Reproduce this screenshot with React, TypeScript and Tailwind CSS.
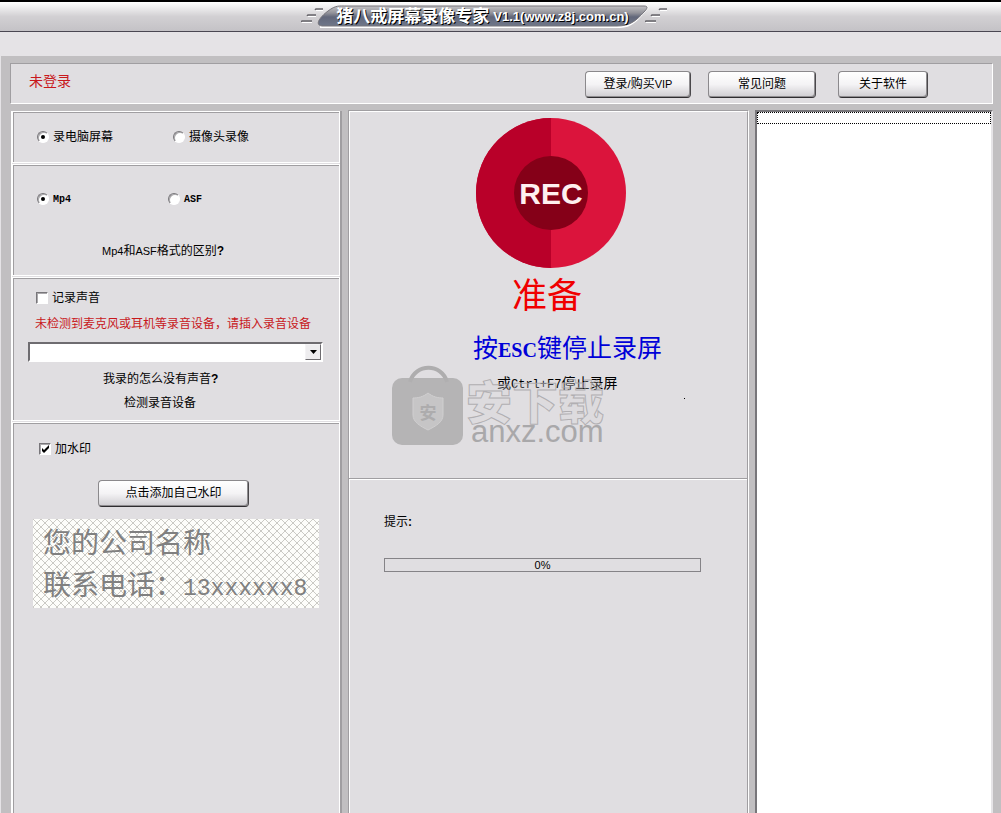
import type { ReactNode } from "react";
import clsx from "clsx";

const Latin = ({ children }: { children: ReactNode }) => (
  <span className="font-['Liberation_Sans','Noto_Sans_CJK_SC',sans-serif] text-[11px]">{children}</span>
);

const Mono = ({ children, className = "text-[10px] font-bold" }: { children: ReactNode; className?: string }) => (
  <span className={clsx("font-['Liberation_Mono',monospace]", className)}>{children}</span>
);

const SkinButton = ({ children, className }: { children: ReactNode; className?: string }) => (
  <button
    type="button"
    className={clsx(
      "h-[27px] rounded-[4px] border border-t-[#8b898c] border-r-[#4a484b] border-b-[#2f2d30] border-l-[#8b898c] bg-linear-to-b from-white via-[#f4f3f5] to-[#cfcdd1] text-center leading-[25px] shadow-[inset_-1px_-1px_0_#8f8d90]",
      className,
    )}
  >
    {children}
  </button>
);

type OptionProps = {
  type: "radio" | "checkbox";
  name: string;
  label: ReactNode;
  defaultChecked?: boolean;
  className?: string;
};

const Option = ({ type, name, label, defaultChecked, className }: OptionProps) => (
  <label className={clsx("flex items-center gap-1 leading-4", className)}>
    <span className="relative flex size-3">
      <input
        type={type}
        name={name}
        defaultChecked={defaultChecked}
        className={clsx(
          "peer size-3 appearance-none border border-t-[#78767a] border-r-white border-b-white border-l-[#78767a] bg-white shadow-[inset_1px_1px_0_#aaa8ab]",
          type === "radio" && "rounded-full",
        )}
      />
      <svg viewBox="0 0 12 12" className="pointer-events-none absolute inset-0 hidden size-3 peer-checked:block">
        {type === "radio" ? <circle cx="6" cy="6" r="2" /> : <path d="M3 5v3l2 2 5-5V2L5 7z" />}
      </svg>
    </span>
    <span>{label}</span>
  </label>
);

const Section = ({ children, className }: { children?: ReactNode; className?: string }) => (
  <section className="flex border border-white not-first:mt-px">
    <div className={clsx("grow border-t border-l border-[#a09ea1]", className)}>{children}</div>
  </section>
);

const Streaks = ({ className }: { className?: string }) => (
  <svg viewBox="0 0 24 18" className={clsx("h-[18px] w-6", className)} fill="none">
    <path d="M14 4.500h8M6 10.500h9M0 16.500h11" stroke="#fff" />
    <path d="M14 4l1-1h7M6 10l1-1h8M0 16l1-1h10" stroke="#66646a" strokeWidth="1.500" />
  </svg>
);

const TitleBar = () => (
  <header className="flex h-8 justify-center border-t-2 border-b border-t-black border-b-[#4a4752] bg-linear-to-b from-white via-[#d2d0d3] to-[#c4c2c6] pt-[3px] pr-8">
    <Streaks className="-mr-2 mt-px" />
    <div className="relative flex h-[23px] w-[332px] justify-center">
      <svg viewBox="0 0 332 23" preserveAspectRatio="none" className="absolute inset-0 size-full">
        <defs>
          <linearGradient id="plate" x1="0" y1="0" x2="0" y2="1">
            <stop offset="0" stopColor="#c4c3c6" />
            <stop offset=".35" stopColor="#929299" />
            <stop offset=".55" stopColor="#62677a" />
            <stop offset="1" stopColor="#6f7789" />
          </linearGradient>
        </defs>
        <path d="M3 22h300c12 0 18-8 28-20" fill="none" stroke="#fff" strokeWidth="2" />
        <path d="M5 21c-8-1-2-9 6-15S22 1 30 1h297c5 0 3 3 0 6-8 9-14 14-27 14z" fill="url(#plate)" stroke="#77757b" />
      </svg>
      <h1 className="relative flex items-center gap-1 whitespace-nowrap text-white [text-shadow:1px_1px_0_#000]">
        <span className="text-[17px] leading-[22px] font-bold">猪八戒屏幕录像专家</span>
        <span className="font-['Liberation_Sans',sans-serif] text-[13px] leading-[22px] font-bold">
          V1.1(www.z8j.com.cn)
        </span>
      </h1>
    </div>
    <Streaks className="-ml-1 mt-px" />
  </header>
);

const RecordingOptions = () => (
  <aside className="mt-px flex w-[331px] shrink-0 flex-col border-r-2 border-l border-r-[#a09ea1] border-l-white bg-[#e0dee1]">
    <Section className="flex h-[50px] pt-4 pl-[23px]">
      <Option type="radio" name="source" label="录电脑屏幕" defaultChecked className="h-4 w-[136px]" />
      <Option type="radio" name="source" label="摄像头录像" className="h-4" />
    </Section>

    <Section className="h-[110px] pt-6 pl-[23px]">
      <div className="flex">
        <Option type="radio" name="format" label={<Mono>Mp4</Mono>} defaultChecked className="w-[131px]" />
        <Option type="radio" name="format" label={<Mono>ASF</Mono>} />
      </div>
      <a href="#format" className="mt-[35px] ml-[65px] block leading-4">
        <Latin>Mp4</Latin>和<Latin>ASF</Latin>格式的区别<b>?</b>
      </a>
    </Section>

    <Section className="h-[142px] pt-[11px] pl-[14px]">
      <Option type="checkbox" name="sound" label="记录声音" className="ml-2" />
      <p className="mt-[10px] ml-[7px] leading-4 whitespace-nowrap text-[#c8181c]">
        未检测到麦克风或耳机等录音设备，请插入录音设备
      </p>
      <div className="relative mt-[10px] mr-4">
        <select
          aria-label="录音设备"
          className="block h-5 w-full appearance-none border-2 border-t-[#6e6c70] border-r-white border-b-white border-l-[#6e6c70] bg-white"
        />
        <span className="pointer-events-none absolute top-[2px] right-[2px] flex h-4 w-4 items-center justify-center border border-t-[#f4f3f5] border-r-[#6e6c70] border-b-[#6e6c70] border-l-[#f4f3f5] bg-[#eeedef]">
          <svg viewBox="0 0 7 4" className="h-1 w-[7px]">
            <path d="M0 0h7L3.500 4z" />
          </svg>
        </span>
      </div>
      <a href="#no-sound" className="mt-[9px] ml-[75px] block leading-4">
        我录的怎么没有声音<b>?</b>
      </a>
      <a href="#devices" className="mt-2 ml-[96px] block leading-4">
        检测录音设备
      </a>
    </Section>

    <section className="mt-px flex grow border border-b-0 border-white">
      <div className="grow border-t border-l border-[#a09ea1] pt-[17px] pl-[19px]">
        <Option type="checkbox" name="watermark" label="加水印" defaultChecked className="ml-[6px]" />
        <SkinButton className="mt-[23px] ml-[65px] block w-[151px]">点击添加自己水印</SkinButton>
        <WatermarkPreview />
      </div>
    </section>
  </aside>
);

const WatermarkPreview = () => (
  <div className="relative mt-3 mr-5 h-[89px] pt-1 pl-[10px] text-[28px] leading-[42px] whitespace-nowrap text-[#808080]">
    <svg className="absolute inset-0 size-full">
      <defs>
        <pattern id="hatch" width="8" height="8" patternUnits="userSpaceOnUse">
          <path d="M0 0l8 8M8 0L0 8" stroke="#cbcac5" />
        </pattern>
      </defs>
      <rect width="100%" height="100%" fill="#fdfdfa" />
      <rect width="100%" height="100%" fill="url(#hatch)" />
    </svg>
    <p className="relative">您的公司名称</p>
    <p className="relative">
      联系电话：<Mono className="text-[23px]">13xxxxxx8</Mono>
    </p>
  </div>
);

const RecordButton = () => (
  <button type="button" aria-label="REC" className="block size-[150px]">
    <svg viewBox="0 0 150 150" className="size-full">
      <circle cx="75" cy="75" r="75" fill="#db143c" />
      <path d="M75 0a75 75 0 0 0 0 150z" fill="#b90029" />
      <circle cx="75" cy="75" r="37" fill="#850018" />
      <text
        x="75"
        y="86"
        textAnchor="middle"
        fill="#fff0f0"
        className="font-['Liberation_Sans',sans-serif] text-[30px] font-bold"
      >
        REC
      </text>
    </svg>
  </button>
);

const SiteMark = () => (
  <svg viewBox="0 0 240 90" className="pointer-events-none absolute -top-2 left-[42px] h-[90px] w-[240px]">
    <path d="M18 17c5-19 32-19 37 0" fill="none" stroke="#aeadae" strokeWidth="4" />
    <rect y="13" width="71" height="67" rx="10" fill="#b0afb0" fillOpacity=".9" />
    <path d="M36 28c5 4 10 5 15 5v17c0 7-7 11-15 15-8-4-15-8-15-15V33c5 0 10-1 15-5z" fill="#c6c5c6" stroke="#d0cfd0" />
    <text x="36" y="54" textAnchor="middle" fill="#adacad" className="text-[17px] font-bold">
      安
    </text>
    <text
      x="74"
      y="54"
      fill="#d6d4d7"
      fillOpacity=".3"
      stroke="#a5a3a6"
      strokeOpacity=".8"
      className="text-[46px] font-black"
    >
      安下载
    </text>
    <text x="79" y="77" fill="#a9a8aa" className="font-['Liberation_Sans',sans-serif] text-[31px]">
      anxz.com
    </text>
  </svg>
);

const RecordingStatus = () => (
  <main className="flex grow flex-col border border-b-0 border-t-[#a09ea1] border-r-white border-l-[#a09ea1] bg-[#e0dee1]">
    <section className="h-[367px] border-t border-r border-l border-t-white border-r-[#a09ea1] border-l-white pt-[6px]">
      <div className="ml-[126px]">
        <RecordButton />
      </div>
      <h2 className="mt-[6px] ml-[162px] text-[35px] leading-[44px] text-[#f00000]">准备</h2>
      <p className="mt-[14px] ml-[123px] text-[25px] leading-8 text-[#0000d8]">
        按<span className="font-['Liberation_Serif',serif] text-[20px] font-bold">ESC</span>键停止录屏
      </p>
      <div className="relative mt-[7px]">
        <p className="ml-[147px] text-[14px] leading-5">
          或<Mono className="text-[12px]">Ctrl+F7</Mono>停止录屏
        </p>
        <SiteMark />
        <span className="absolute top-[25px] left-[334px] size-px bg-black" />
      </div>
    </section>

    <section className="flex grow border-t border-r border-[#a09ea1]">
      <div className="grow border-t border-l border-white pt-[34px] pr-[46px] pl-[34px]">
        <p className="leading-4">
          提示<b>:</b>
        </p>
        <div
          role="progressbar"
          aria-valuenow={0}
          aria-label="录制进度"
          className="mt-7 h-[14px] border border-[#858387] text-center font-['Liberation_Sans',sans-serif] text-[11px] leading-3"
        >
          0%
        </div>
      </div>
    </section>
  </main>
);

const FileList = () => (
  <ul
    aria-label="录像文件"
    className="w-[238px] shrink-0 border-2 border-b-0 border-t-[#78767a] border-r-[#e6e4e7] border-l-[#78767a] bg-white"
  >
    <li className="h-3 border border-dotted border-black" />
  </ul>
);

export default function App() {
  return (
    <div className="flex min-h-screen flex-col bg-[#e0dee1] font-['Liberation_Sans','Noto_Sans_CJK_SC',sans-serif] text-xs text-black">
      <TitleBar />
      <div className="h-6 bg-[#e5e3e6]" />

      <div className="flex grow flex-col border-l border-[#e5e3e6] bg-[#c1bfc1] pt-[7px] pr-2 pl-[9px]">
        <div className="flex h-[41px] justify-between border border-t-[#a09ea1] border-r-white border-b-white border-l-[#a09ea1] bg-[#e0dee1] pt-[7px] pr-16 pl-[18px]">
          <span className="text-[14px] leading-5 text-[#c8181c]">未登录</span>
          <nav className="flex">
            <SkinButton className="w-[106px]">
              登录<Latin>/</Latin>购买<Latin>VIP</Latin>
            </SkinButton>
            <SkinButton className="ml-[17px] w-[108px]">常见问题</SkinButton>
            <SkinButton className="ml-[22px] w-[90px]">关于软件</SkinButton>
          </nav>
        </div>

        <div className="mt-[6px] flex grow gap-[6px] pl-px">
          <RecordingOptions />
          <RecordingStatus />
          <FileList />
        </div>
      </div>
    </div>
  );
}
